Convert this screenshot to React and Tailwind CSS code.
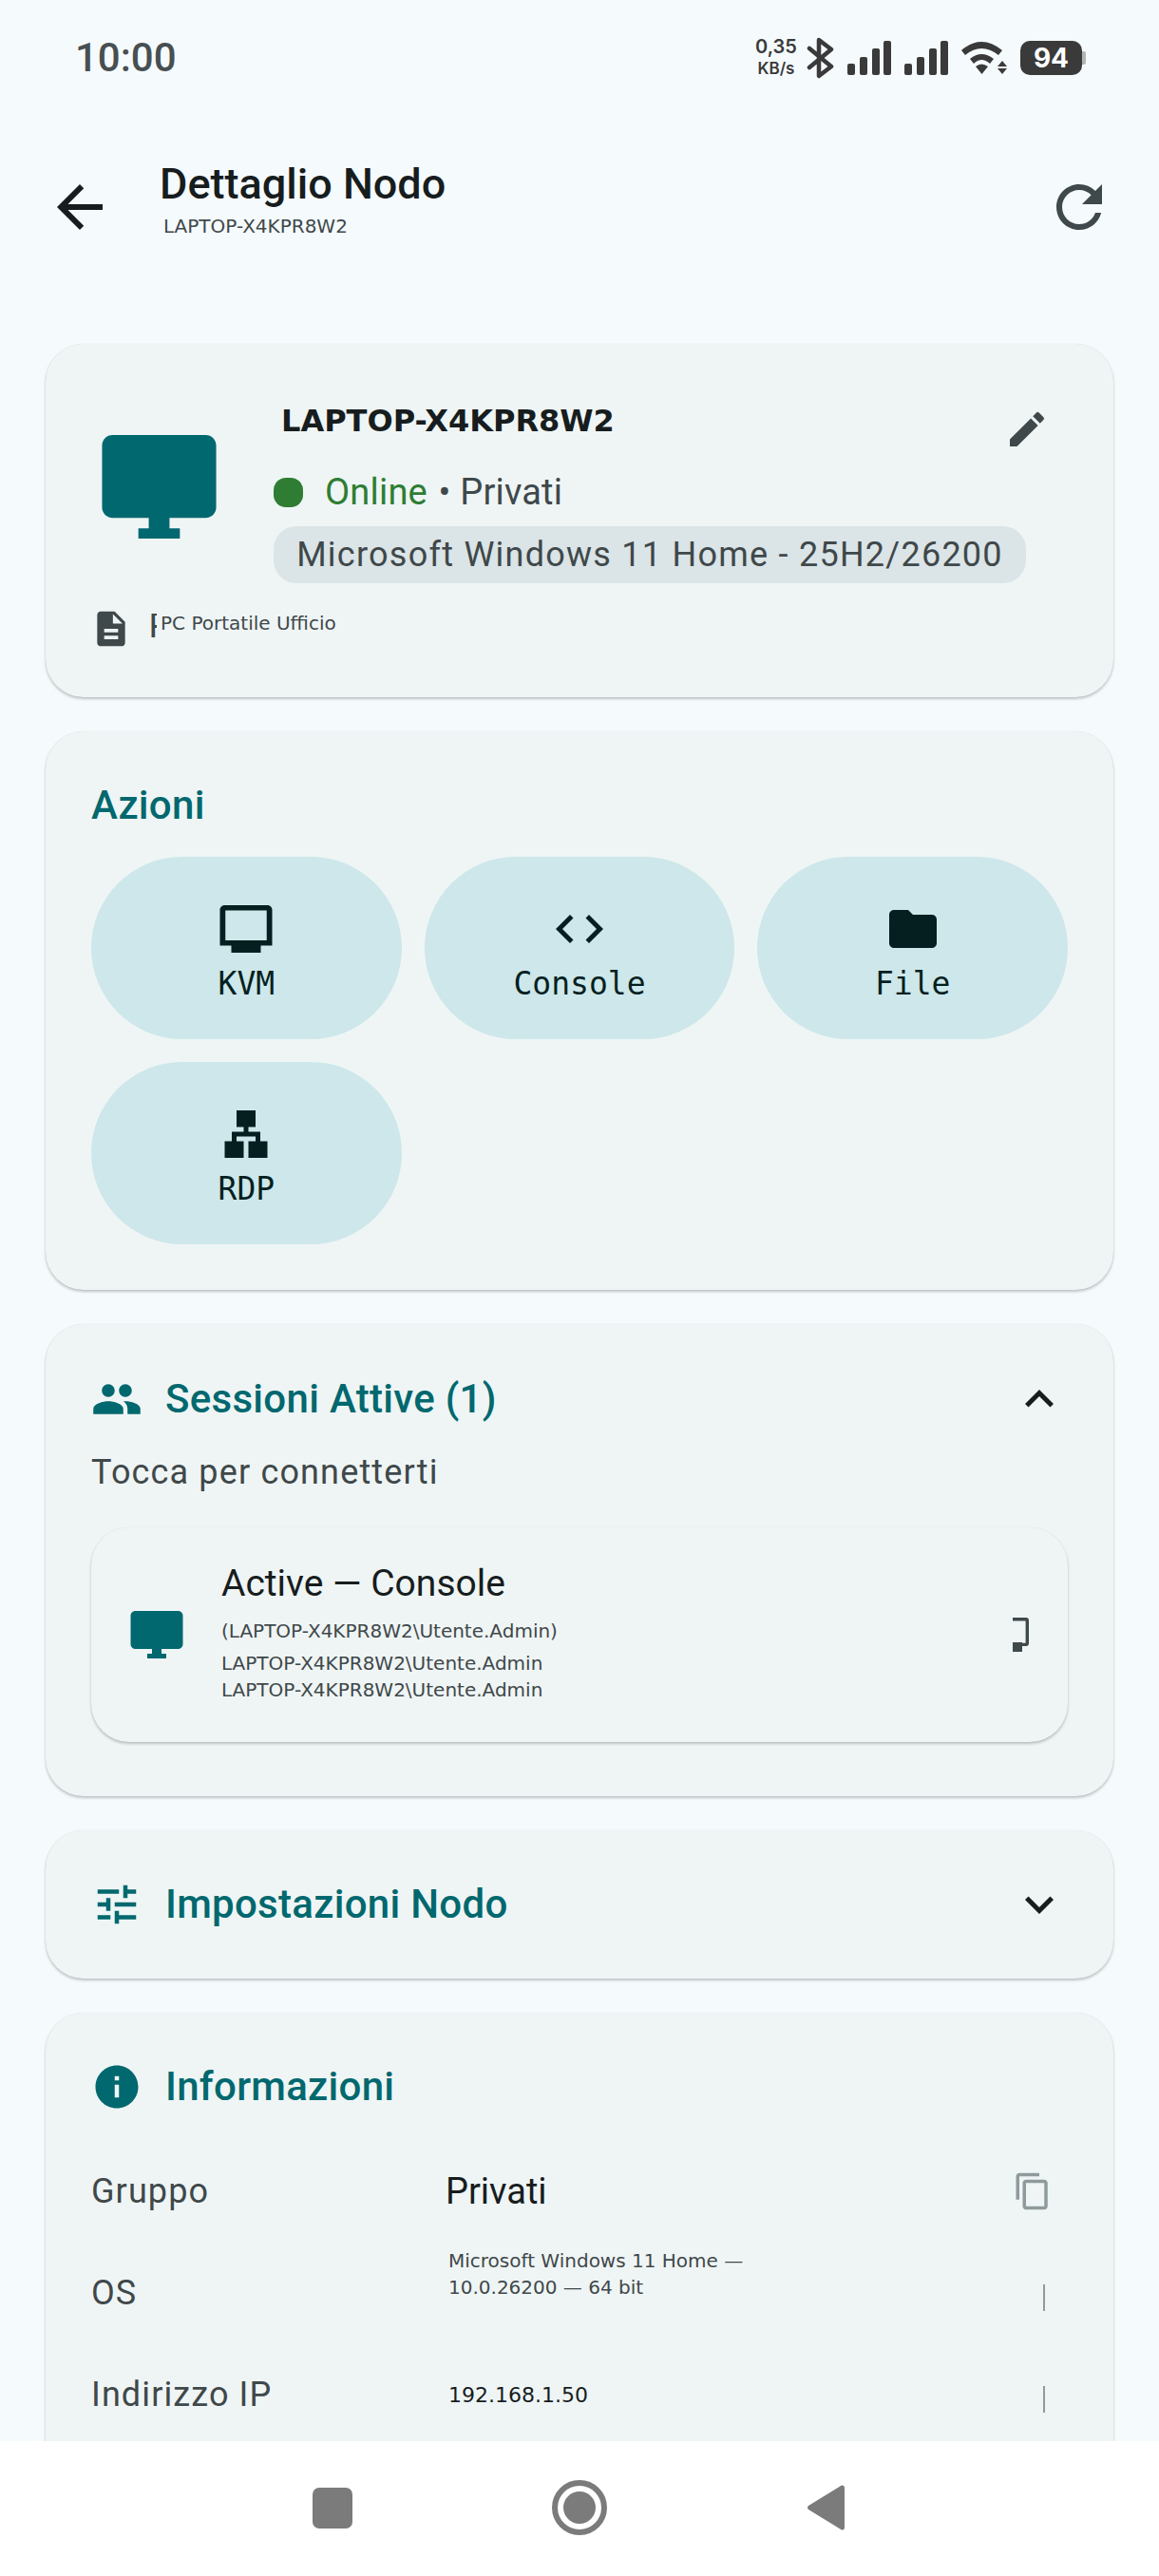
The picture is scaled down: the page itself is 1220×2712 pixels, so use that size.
import React from "react";
import { MdArrowBack, MdRefresh, MdEdit, MdCode, MdFolder, MdDescription, MdPeople, MdExpandLess, MdExpandMore, MdTune, MdInfo, MdContentCopy } from "react-icons/md";

const Monitor = ({ className }) => (
  <svg viewBox="0 0 24 24" fill="currentColor" className={className}>
    <path d="M21 2H3c-1.100 0-2 .9-2 2v12c0 1.100.9 2 2 2h7v2H8v2h8v-2h-2v-2h7c1.100 0 2-.9 2-2V4c0-1.100-.9-2-2-2z" />
  </svg>
);

const MonitorOutline = ({ className }) => (
  <svg viewBox="0 0 24 24" fill="currentColor" fillRule="evenodd" className={className}>
    <path d="M21 2H3c-1.100 0-2 .9-2 2v15h4.800v3h12.400v-3H23V4c0-1.100-.9-2-2-2zM3.300 4.200h17.400v12.600H3.300z" />
  </svg>
);

const Lan = ({ className }) => (
  <svg viewBox="0 0 24 24" fill="currentColor" className={className}>
    <path d="M13 22h8v-7h-3v-4h-5V9h3V2H8v7h3v2H6v4H3v7h8v-7H8v-2h8v2h-3z" />
  </svg>
);

const Signal = () => (
  <svg width="46" height="36" viewBox="0 0 46 36" fill="#3a3a3a">
    <rect x="0" y="24" width="8" height="12" rx="2" />
    <rect x="13" y="17" width="8" height="19" rx="2" />
    <rect x="26" y="8" width="8" height="28" rx="2" />
    <rect x="38" y="0" width="8" height="36" rx="2" />
  </svg>
);

const StatusBar = () => (
  <div className="flex h-[122px] items-center pl-[79px] pr-[77px] font-['Inter'] text-[#3a3a3a]">
    <span className="font-['Roboto'] text-[42px] font-medium leading-none text-[#474f51]">10:00</span>
    <div className="ml-auto flex items-center">
      <div className="-mt-[2px] flex w-[46px] flex-col items-center font-semibold leading-none">
        <span className="text-[20px]">0,35</span>
        <span className="mt-[5px] text-[17px]">KB/s</span>
      </div>
      <svg width="30" height="44" viewBox="0 0 30 44" fill="none" stroke="#3a3a3a" strokeWidth="4.500" strokeLinecap="round" strokeLinejoin="round" className="ml-[9px]">
        <path d="M3 12 L26 31 L13 41 V3 L26 13 L3 32" />
      </svg>
      <div className="ml-[13px]"><Signal /></div>
      <div className="ml-[14px]"><Signal /></div>
      <svg width="48" height="36" viewBox="0 0 48 36" fill="#3a3a3a" className="ml-[14px]">
        <path d="M0 10 Q21 -8 43 10 L39 15 Q21 1 4 15 Z" />
        <path d="M9 19 Q21 9 34 19 L30 24 Q21 16 13 24 Z" />
        <path d="M15 27 Q21 22 28 27 L21.500 35 Z" />
        <path d="M43 21 L48 27 H38 Z" />
        <path d="M38 29 H48 L43 35 Z" />
      </svg>
      <div className="ml-[14px] flex items-center">
        <div className="flex h-[36px] w-[65px] items-center justify-center rounded-[10px] bg-[#3a3a3a] text-[28px] font-bold leading-none text-white">94</div>
        <div className="h-[14px] w-[4px] rounded-r-[2px] bg-[#b4b4b4]"></div>
      </div>
    </div>
  </div>
);

const AppBar = () => (
  <div className="flex h-[240px] items-start pl-[48px] pr-[60px]">
    <div className="mt-[60px] flex h-[72px] w-[72px] items-center justify-center text-[#171d1e]">
      <MdArrowBack className="h-[72px] w-[72px]" />
    </div>
    <div className="ml-[48px] mt-[44px] flex flex-col">
      <span className="font-['Roboto'] text-[45px] font-medium leading-[56px] text-[#171d1e]">Dettaglio Nodo</span>
      <span className="ml-[4px] mt-[3px] font-['DejaVu_Sans'] text-[20px] leading-[26px] text-[#3f484a]">LAPTOP-X4KPR8W2</span>
    </div>
    <div className="ml-auto mt-[60px] flex h-[72px] w-[60px] items-center justify-start overflow-hidden text-[#3f484a]">
      <MdRefresh className="h-[72px] w-[72px] shrink-0" />
    </div>
  </div>
);

const Card = ({ className, children }) => (
  <section className={`rounded-[40px] bg-[#eff5f5] shadow-[0_2px_3px_rgba(0,0,0,0.22),0_0_1px_rgba(0,0,0,0.12)] ${className}`}>{children}</section>
);

const NodeCard = () => (
  <Card className="h-[372px] px-[48px] pt-[48px]">
    <div className="flex">
      <div className="flex w-[192px] items-center pl-[6px]">
        <Monitor className="h-[131px] w-[131px] text-[#00686e]" />
      </div>
      <div className="flex flex-1 flex-col">
        <div className="flex h-[84px] items-start">
          <span className="ml-[8px] mt-[15px] font-['DejaVu_Sans'] text-[32px] font-bold leading-[36px] text-[#171d1e]">LAPTOP-X4KPR8W2</span>
          <MdEdit className="ml-auto mr-[19px] mt-[18px] h-[48px] w-[48px] text-[#3f484a]" />
        </div>
        <div className="flex h-[48px] items-center whitespace-pre font-['Roboto'] text-[38px] leading-[48px] tracking-[0.2px] text-[#3f484a]">
          <span className="h-[31px] w-[31px] rounded-[13px] bg-[#2e7d32]"></span>
          <span className="ml-[23px] text-[#2e7d32]">Online</span>
          <span className="ml-[2px]"> • Privati</span>
        </div>
        <div className="mt-[12px] flex h-[60px] w-[792px] items-center justify-center rounded-[24px] bg-[#dbe4e6] font-['Roboto'] text-[36px] tracking-[1.25px] text-[#3f484a]">
          Microsoft Windows 11 Home - 25H2/26200
        </div>
      </div>
    </div>
    <div className="mt-[30px] flex h-[40px] items-start">
      <MdDescription className="-mt-[4px] h-[44px] w-[44px] shrink-0 -ml-[1px]" color="#3f484a" />
      <span className="ml-[17px] mt-[2px] h-[26px] w-[9px] overflow-hidden font-['DejaVu_Sans'] text-[36px] leading-[26px] text-[#3f484a]">P</span>
      <span className="ml-[4px] font-['DejaVu_Sans'] text-[20px] leading-[24px] text-[#3f484a]">PC Portatile Ufficio</span>
    </div>
  </Card>
);

const ActionButton = ({ icon, label }) => (
  <button className="flex h-[192px] flex-col items-center rounded-full bg-[#cde7ea] pt-[46px] text-[#051f21]">
    {icon}
    <span className="mt-[6px] font-['DejaVu_Sans_Mono'] text-[33px] leading-[44px]">{label}</span>
  </button>
);

const ActionsCard = () => (
  <Card className="h-[588px] px-[48px] pt-[48px]">
    <h2 className="font-['Roboto'] text-[42px] font-medium leading-[60px] tracking-[0.3px] text-[#00686e]">Azioni</h2>
    <div className="mt-[24px] grid grid-cols-3 gap-[24px]">
      <ActionButton icon={<MonitorOutline className="h-[60px] w-[60px]" />} label="KVM" />
      <ActionButton icon={<MdCode className="h-[60px] w-[60px]" />} label="Console" />
      <ActionButton icon={<MdFolder className="h-[60px] w-[60px]" />} label="File" />
      <ActionButton icon={<Lan className="h-[60px] w-[60px]" />} label="RDP" />
    </div>
  </Card>
);

const SectionTitle = ({ icon, label, right }) => (
  <div className="flex h-[60px] items-center">
    <div className="flex w-[78px] justify-start">{icon}</div>
    <h2 className="font-['Roboto'] text-[42px] font-medium leading-[60px] tracking-[0.3px] text-[#00686e]">{label}</h2>
    {right && <div className="ml-auto mr-0 flex text-[#171d1e]">{right}</div>}
  </div>
);

const SessionsCard = () => (
  <Card className="h-[497px] px-[48px] pt-[49px]">
    <SectionTitle
      icon={<MdPeople className="h-[54px] w-[54px] text-[#00686e]" />}
      label="Sessioni Attive (1)"
      right={<MdExpandLess className="h-[60px] w-[60px]" />}
    />
    <p className="mt-[23px] font-['Roboto'] text-[36px] leading-[48px] tracking-[1.15px] text-[#3f484a]">Tocca per connetterti</p>
    <div className="mt-[34px] flex h-[226px] items-center rounded-[40px] bg-[#eff5f5] pb-[6px] pl-[39px] pr-[36px] shadow-[0_2px_3px_rgba(0,0,0,0.22),0_0_1px_rgba(0,0,0,0.1)]">
      <Monitor className="mt-[6px] h-[60px] w-[60px] shrink-0 text-[#00686e]" />
      <div className="ml-[38px] -mt-[2px] flex flex-col">
        <span className="font-['Roboto'] text-[39px] leading-[52px] text-[#171d1e]">Active — Console</span>
        <span className="mt-[10px] font-['DejaVu_Sans'] text-[20px] leading-[28px] text-[#3f484a]">(LAPTOP-X4KPR8W2\Utente.Admin)</span>
        <span className="mt-[6px] font-['DejaVu_Sans'] text-[20px] leading-[28px] text-[#3f484a]">LAPTOP-X4KPR8W2\Utente.Admin</span>
        <span className="font-['DejaVu_Sans'] text-[20px] leading-[28px] text-[#3f484a]">LAPTOP-X4KPR8W2\Utente.Admin</span>
      </div>
      <svg width="17" height="36" viewBox="0 0 17 36" fill="#3f484a" className="ml-auto mr-[5px] mt-[6px]">
        <path d="M0 0 H14 Q17 0 17 3 V27 Q17 30 14 30 H10 V36 H0 V26 H10 V26.700 H13.600 V3.400 H0 Z" />
      </svg>
    </div>
  </Card>
);

const SettingsCard = () => (
  <Card className="h-[156px] px-[48px] pt-[48px]">
    <SectionTitle
      icon={<MdTune className="h-[54px] w-[54px] text-[#00686e]" />}
      label="Impostazioni Nodo"
      right={<MdExpandMore className="h-[60px] w-[60px]" />}
    />
  </Card>
);

const InfoRow = ({ label, className, children, action }) => (
  <div className={`flex items-center ${className}`}>
    <span className="w-[373px] shrink-0 font-['Roboto'] text-[36px] leading-[48px] tracking-[1.1px] text-[#3f484a]">{label}</span>
    <div className="flex-1">{children}</div>
    <div className="flex w-[60px] justify-end pr-[20px]">{action}</div>
  </div>
);

const Tick = () => <span className="mr-[4px] mt-[10px] block h-[28px] w-[2px] bg-[#8f9a9c]"></span>;

const InfoCard = () => (
  <Card className="h-[600px] px-[48px] pt-[48px]">
    <SectionTitle icon={<MdInfo className="h-[54px] w-[54px] text-[#00686e]" />} label="Informazioni" />
    <div className="mt-[56px] flex flex-col">
      <InfoRow
        label="Gruppo"
        className="h-[48px]"
        action={<MdContentCopy className="-mr-[4px] h-[42px] w-[42px] text-[#8f9a9c]" />}
      >
        <span className="font-['Roboto'] text-[38px] leading-[48px] text-[#171d1e]">Privati</span>
      </InfoRow>
      <InfoRow label="OS" className="mt-[55px] h-[56px]" action={<Tick />}>
        <div className="-mt-[41px] pl-[3px] font-['DejaVu_Sans'] text-[20px] leading-[28px] text-[#3f484a]">
          <div>Microsoft Windows 11 Home —</div>
          <div>10.0.26200 — 64 bit</div>
        </div>
      </InfoRow>
      <InfoRow label="Indirizzo IP" className="mt-[55px] h-[48px]" action={<Tick />}>
        <span className="mt-[2px] block pl-[3px] font-['DejaVu_Sans'] text-[22px] leading-[28px] text-[#171d1e]">192.168.1.50</span>
      </InfoRow>
    </div>
  </Card>
);

const NavBar = () => (
  <nav className="absolute bottom-0 left-0 flex h-[142px] w-full items-center justify-center bg-white pb-[2px]">
    <span className="-ml-[2px] h-[43px] w-[42px] rounded-[7px] bg-[#7b7b7b]"></span>
    <span className="ml-[210px] flex h-[58px] w-[58px] items-center justify-center rounded-full border-[6px] border-[#7b7b7b]">
      <span className="h-[34px] w-[34px] rounded-full bg-[#7b7b7b]"></span>
    </span>
    <svg width="39" height="48" viewBox="0 0 39 48" fill="#7b7b7b" className="ml-[211px]">
      <path d="M36 0.500 Q39 0 39 3 V45 Q39 48 36 47.500 L1 26 Q-1 24 1 22 Z" />
    </svg>
  </nav>
);

export default function App() {
  return (
    <div className="relative h-[2712px] w-[1220px] overflow-hidden bg-[#f5fafd]">
      <StatusBar />
      <AppBar />
      <main className="flex flex-col gap-[36px] px-[48px]">
        <NodeCard />
        <ActionsCard />
        <SessionsCard />
        <SettingsCard />
        <InfoCard />
      </main>
      <NavBar />
    </div>
  );
}
